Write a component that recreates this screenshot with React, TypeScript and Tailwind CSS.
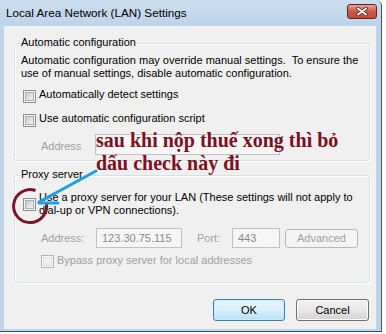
import React from "react";

function Checkbox({ disabled }: { disabled?: boolean }) {
  if (disabled) {
    return (
      <div className="w-[13px] h-[13px] shrink-0 border border-[#b4b4b4] bg-[#f7f7f7] p-[1px]">
        <div className="w-full h-full border border-[#dcdcdc] bg-[#efefef]" />
      </div>
    );
  }
  return (
    <div className="w-[13px] h-[13px] shrink-0 border border-[#8e8f8f] bg-[#f4f4f4] p-[1px]">
      <div className="w-full h-full border border-[#a9aeb4] bg-gradient-to-br from-[#c6cacf] to-[#f3f3f3]" />
    </div>
  );
}

export default function App() {
  return (
    <div className="relative w-[386px] h-[334px] bg-white overflow-hidden font-['Liberation_Sans',Arial,sans-serif] text-[11px] leading-[13px] text-black">
      <div className="w-[382px] h-[332px] flex flex-col bg-[#bfd4e9] border-r border-b border-[#3b5668] rounded-tr-[6px]">
        {/* title bar */}
        <div className="h-[26px] flex items-start bg-gradient-to-b from-[#cbdef0] to-[#bdd3e9] rounded-tr-[6px]">
          <div className="ml-[6px] mt-[6px] text-[11.7px] leading-[14px] text-black">
            Local Area Network (LAN) Settings
          </div>
          <div className="ml-auto mt-[4px] mr-[4px] w-[30px] h-[15px] rounded-[3px] border border-[#6f2118] bg-gradient-to-b from-[#e3a49a] via-[#c9574b] to-[#c34c3e] flex items-center justify-center">
            <svg width="12" height="9" viewBox="0 0 12 9">
              <path d="M2 1.5 L10 7.5 M10 1.5 L2 7.5" stroke="#5a1d17" strokeWidth="3.4" strokeLinecap="round" />
              <path d="M2 1.5 L10 7.5 M10 1.5 L2 7.5" stroke="#ffffff" strokeWidth="2" strokeLinecap="round" />
            </svg>
          </div>
        </div>

        {/* content */}
        <div className="ml-[4px] w-[372px] h-[303px] bg-[#f0f0f0] flex flex-col">
          {/* Automatic configuration group */}
          <div className="mt-[17px] ml-[10px] w-[356px] h-[118px] rounded-[3px] border border-[#d5dfe5] shadow-[inset_1px_1px_0_#ffffff,1px_1px_0_#ffffff] flex flex-col">
            <div className="-mt-[8px] ml-[5px] px-[1px] w-fit bg-[#f0f0f0]">Automatic configuration</div>
            <div className="mt-[5px] pl-[6px]">
              <div>Automatic configuration may override manual settings.&nbsp; To ensure the</div>
              <div>use of manual settings, disable automatic configuration.</div>
            </div>
            <div className="mt-[8px] pl-[8px] flex items-start">
              <div className="mt-[2px]"><Checkbox /></div>
              <div className="ml-[3px]">Automatically detect settings</div>
            </div>
            <div className="mt-[9px] pl-[8px] flex items-start">
              <div className="mt-[2px]"><Checkbox /></div>
              <div className="ml-[3px]">Use automatic configuration script</div>
            </div>
            <div className="mt-[7px] pl-[26px] flex items-start">
              <div className="mt-[6px] w-[54px] text-[#a0a0a0]">Address</div>
              <div className="w-[185px] h-[21px] border border-[#c2c2c2] bg-[#f6f6f6]" />
            </div>
          </div>

          {/* Proxy server group */}
          <div className="mt-[14px] ml-[10px] w-[356px] h-[108px] rounded-[3px] border border-[#d5dfe5] shadow-[inset_1px_1px_0_#ffffff,1px_1px_0_#ffffff] flex flex-col">
            <div className="-mt-[8px] ml-[5px] px-[1px] w-fit bg-[#f0f0f0]">Proxy server</div>
            <div className="mt-[10px] pl-[8px] flex items-center">
              <Checkbox />
              <div className="ml-[3px]">
                <div>Use a proxy server for your LAN (These settings will not apply to</div>
                <div>dial-up or VPN connections).</div>
              </div>
            </div>
            <div className="mt-[11px] pl-[26px] flex items-start">
              <div className="mt-[4px] w-[55px] text-[#a0a0a0]">Address:</div>
              <div className="w-[86px] h-[20px] border border-[#c2c2c2] bg-[#f6f6f6] pl-[5px] pt-[3px] text-[#8a8a8a]">123.30.75.115</div>
              <div className="ml-[15px] mt-[4px] w-[35px] text-[#a0a0a0]">Port:</div>
              <div className="w-[48px] h-[20px] border border-[#c2c2c2] bg-[#f6f6f6] pl-[5px] pt-[3px] text-[#8a8a8a]">443</div>
              <div className="ml-[5px] mt-[1px] w-[73px] h-[19px] rounded-[3px] border border-[#b5b9bc] bg-[#f4f4f4] flex items-center justify-center text-[#a0a0a0]">Advanced</div>
            </div>
            <div className="mt-[6px] pl-[26px] flex items-start">
              <div className="mt-[1px]"><Checkbox disabled /></div>
              <div className="ml-[3px] text-[#a0a0a0]">Bypass proxy server for local addresses</div>
            </div>
          </div>

          {/* buttons */}
          <div className="mt-[16px] pr-[7px] flex justify-end gap-[11px]">
            <div className="w-[72px] h-[22px] rounded-[3px] border border-[#3c7fb1] bg-gradient-to-b from-[#eaf6fd] via-[#d9f0fc] to-[#b6e0f8] shadow-[inset_0_0_0_1px_#c8ecfd] flex items-center justify-center">OK</div>
            <div className="w-[73px] h-[22px] rounded-[3px] border border-[#707070] bg-gradient-to-b from-[#f2f2f2] via-[#e8e8e8] to-[#d2d2d2] shadow-[inset_0_0_0_1px_#fbfbfb] flex items-center justify-center">Cancel</div>
          </div>
        </div>
      </div>

      {/* annotation overlay */}
      <div className="absolute left-[96px] top-[129px] font-['Liberation_Serif','Times_New_Roman',serif] font-bold text-[20px] leading-[23px] text-[#7e0f1f] whitespace-nowrap">
        <div>sau khi nộp thuế xong thì bỏ</div>
        <div>dấu check này đi</div>
      </div>
      <svg className="absolute left-0 top-0 pointer-events-none" width="386" height="334" viewBox="0 0 386 334">
        <path d="M35.5 190.5 A16.5 16.5 0 1 0 46.3 203" fill="none" stroke="#7a1426" strokeWidth="3" />
        <path d="M96 171 L39 202" stroke="#1f9fe0" strokeWidth="3" strokeLinecap="round" />
        <path d="M39 203 L58 203" stroke="#1f9fe0" strokeWidth="3" strokeLinecap="round" />
      </svg>
    </div>
  );
}
